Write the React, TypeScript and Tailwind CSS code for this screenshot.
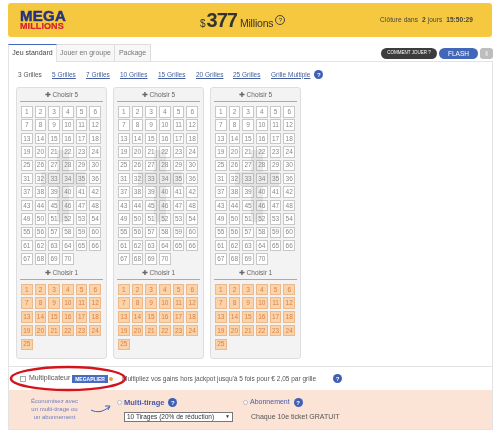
import React from "react";

const whites = Array.from({ length: 70 }, (_, i) => i + 1);
const oranges = Array.from({ length: 25 }, (_, i) => i + 1);
const gridLinks = [
  { label: "5 Grilles", w: "w-[34px]" },
  { label: "7 Grilles", w: "w-[34px]" },
  { label: "10 Grilles", w: "w-[38px]" },
  { label: "15 Grilles", w: "w-[38px]" },
  { label: "20 Grilles", w: "w-[37px]" },
  { label: "25 Grilles", w: "w-[38px]" },
];

const Help = () => (
  <span className="flex items-center justify-center w-[9px] h-[9px] rounded-full bg-[#3f5fb5] text-white text-[6px] font-bold leading-none">
    ?
  </span>
);

const Card = () => (
  <div className="relative w-[91px] h-[272px] bg-[#f3f3f3] border border-[#dedede] rounded-[3px] px-[2px]">
    <div className="h-[12px] mt-[1px] text-center text-[6.5px] leading-[12px] text-[#666]">✚ Choisir 5</div>
    <div className="h-px mx-[1px] bg-[#aaa] mb-[4px]" />
    <div className="grid grid-cols-[repeat(6,11.5px)] auto-rows-[11.5px] gap-x-[2.2px] gap-y-[1.9px] pl-[2px]">
      {whites.map((n) => (
        <div key={n} className="flex items-center justify-center bg-white border border-[#c8c8c8] text-[6.5px] text-[#8a8a8a]">
          {n}
        </div>
      ))}
    </div>
    <div className="h-[12px] mt-[2px] text-center text-[6.5px] leading-[12px] text-[#666]">✚ Choisir 1</div>
    <div className="h-px mx-[1px] bg-[#aaa] mb-[4px]" />
    <div className="grid grid-cols-[repeat(6,11.5px)] auto-rows-[11.5px] gap-x-[2.2px] gap-y-[2.2px] pl-[2px]">
      {oranges.map((n) => (
        <div key={n} className="flex items-center justify-center bg-[#fbd3ab] border border-[#eeb98a] text-[6.5px] text-[#d9803f]">
          {n}
        </div>
      ))}
    </div>
    {/* faded clover watermark behind the numbers */}
    <svg className="absolute left-[24px] top-[62px] pointer-events-none" width="44" height="72" viewBox="0 0 44 72">
      <path d="M16 0h12v22h16v14H28v36H16V36H0V22h16z" fill="#888" opacity="0.16" />
    </svg>
  </div>
);

const App = () => {
  return (
    <div className="relative w-[500px] h-[436px] overflow-hidden bg-white font-['Liberation_Sans',Arial,sans-serif] blur-[0.4px]">
      {/* header */}
      <div className="flex items-center h-[34px] mt-[3px] ml-[8px] w-[484px] rounded-[3px] bg-[#f6c83f]">
        <div className="w-[192px] pl-[12px] flex flex-col">
          <div className="text-[15px] h-[13px] leading-[13px] font-black text-[#26337f] tracking-[0.3px] [-webkit-text-stroke:0.5px_#26337f]">MEGA</div>
          <div className="text-[9px] h-[9px] leading-[9px] font-black text-[#d3202e] tracking-[0.1px] [-webkit-text-stroke:0.2px_#d3202e]">MILLIONS</div>
        </div>
        <div className="flex items-baseline text-[#333]">
          <span className="text-[10px]">$</span>
          <span className="text-[20px] font-bold leading-[34px] ml-px tracking-[-1px]">377</span>
          <span className="text-[10.5px] ml-[3px] tracking-[-0.2px]">Millions</span>
          <span className="flex items-center justify-center self-center ml-[2px] w-[10px] h-[10px] rounded-full border border-[#444] text-[6px] leading-none">?</span>
        </div>
        <div className="ml-auto pr-[19px] text-[6.5px] text-[#444] tracking-[0.1px]">
          Clôture dans <b className="ml-[2px]">2</b> jours <b className="ml-[2px]">15:50:29</b>
        </div>
      </div>

      {/* tabs */}
      <div className="flex items-end h-[17px] mt-[7px] ml-[8px] w-[485px]">
        <div className="flex items-center justify-center w-[49px] h-[18px] bg-white border-t border-x border-t-[#4267b8] border-x-[#e3e3e3] text-[7px] text-[#444] relative z-10 -mb-px">Jeu standard</div>
        <div className="flex items-center justify-center w-[58px] h-[17px] bg-[#f7f7f7] border border-b-0 border-l-0 border-[#ddd] text-[7px] text-[#777]">Jouer en groupe</div>
        <div className="flex items-center justify-center w-[36px] h-[17px] bg-[#f7f7f7] border border-b-0 border-l-0 border-[#ddd] text-[7px] text-[#777]">Package</div>
        <div className="ml-auto flex items-center gap-[2px] mb-[2px]">
          <div className="flex items-center justify-center w-[56px] h-[11px] rounded-full bg-[#3c3c3c] text-white text-[4.5px]">COMMENT JOUER ?</div>
          <div className="flex items-center justify-center w-[39px] h-[11px] rounded-full bg-[#4267b8] text-white text-[6.5px]">FLASH</div>
          <div className="flex items-center justify-center w-[13px] h-[11px] rounded-[3px] bg-[#bdbdbd] text-[#ddd] text-[6px]">▮</div>
        </div>
      </div>

      {/* main panel */}
      <div className="ml-[8px] w-[485px] h-[369px] border border-[#e3e3e3] flex flex-col">
        <div className="flex items-center h-[25px] pl-[9px] text-[6.5px]">
          <span className="w-[34px] text-[#555]">3 Grilles</span>
          {gridLinks.map((l) => (
            <span key={l.label} className={`${l.w} text-[#46609f]`}>
              <span className="underline">{l.label}</span>
            </span>
          ))}
          <span className="text-[#46609f] underline">Grille Multiple</span>
          <span className="ml-[4px]"><Help /></span>
        </div>

        <div className="flex gap-[6px] pl-[7px] h-[279px]">
          <Card />
          <Card />
          <Card />
        </div>

        <div className="flex items-center h-[24px] border-t border-[#e3e3e3] pl-[11px] text-[7px] text-[#555]">
          <span className="w-[6px] h-[6px] border border-[#aaa] bg-white" />
          <span className="ml-[3px] w-[43px]">Multiplicateur</span>
          <span className="px-[1px] h-[8px] w-[36px] leading-[8px] bg-[#4a6cc0] text-white text-[5px] font-bold text-center">MEGAPLIER</span>
          <span className="ml-[1px] w-[4px] h-[4px] rounded-full bg-[#f0a030]" />
          <span className="ml-[9px] w-[211px] text-[6.5px]">Multipliez vos gains hors jackpot jusqu'à 5 fois pour € 2,05 par grille</span>
          <Help />
        </div>

        <div className="flex h-[39px] bg-[#fbe3d5]">
          <div className="w-[81px] pl-[18px] pr-[8px] pt-[7px] text-center text-[6px] leading-[8px] whitespace-nowrap text-[#6f7fc0]">
            Économisez avec
            <br />
            un multi-tirage ou
            <br />
            un abonnement
          </div>
          <svg className="mt-[14px]" width="22" height="10" viewBox="0 0 22 10">
            <path d="M1 6c6 3 12 2 18-3M15 2l5 0-2 4" fill="none" stroke="#3f5fb5" strokeWidth="1" />
          </svg>
          <div className="ml-[5px] w-[126px] pt-[8px]">
            <div className="flex items-center h-[9px] text-[7.5px] font-bold text-[#4a5aa8]">
              <span className="w-[5px] h-[5px] rounded-full border border-[#bbb] bg-white mr-[2px]" />
              Multi-tirage
              <span className="ml-[4px]"><Help /></span>
            </div>
            <div className="flex items-center justify-between mt-[5px] ml-[7px] w-[109px] h-[10px] px-[2px] bg-white border border-[#777] text-[6.5px] text-[#333]">
              10 Tirages (20% de réduction)
              <span className="text-[5px]">▼</span>
            </div>
          </div>
          <div className="pt-[8px] text-[7px] text-[#555]">
            <div className="flex items-center h-[9px] text-[#4a5aa8]">
              <span className="w-[5px] h-[5px] rounded-full border border-[#bbb] bg-white mr-[2px]" />
              <span>Abonnement</span>
              <span className="ml-[4px]"><Help /></span>
            </div>
            <div className="mt-[5px] ml-[8px]">Chaque 10e ticket GRATUIT</div>
          </div>
        </div>
      </div>

      {/* hand-drawn red ring around the multiplier option */}
      <svg className="absolute left-[8px] top-[364px] pointer-events-none" width="120" height="30" viewBox="0 0 120 30">
        <ellipse cx="60" cy="14.5" rx="57" ry="11.5" fill="none" stroke="#d3141c" strokeWidth="2.5" />
      </svg>
    </div>
  );
};

export default App;
